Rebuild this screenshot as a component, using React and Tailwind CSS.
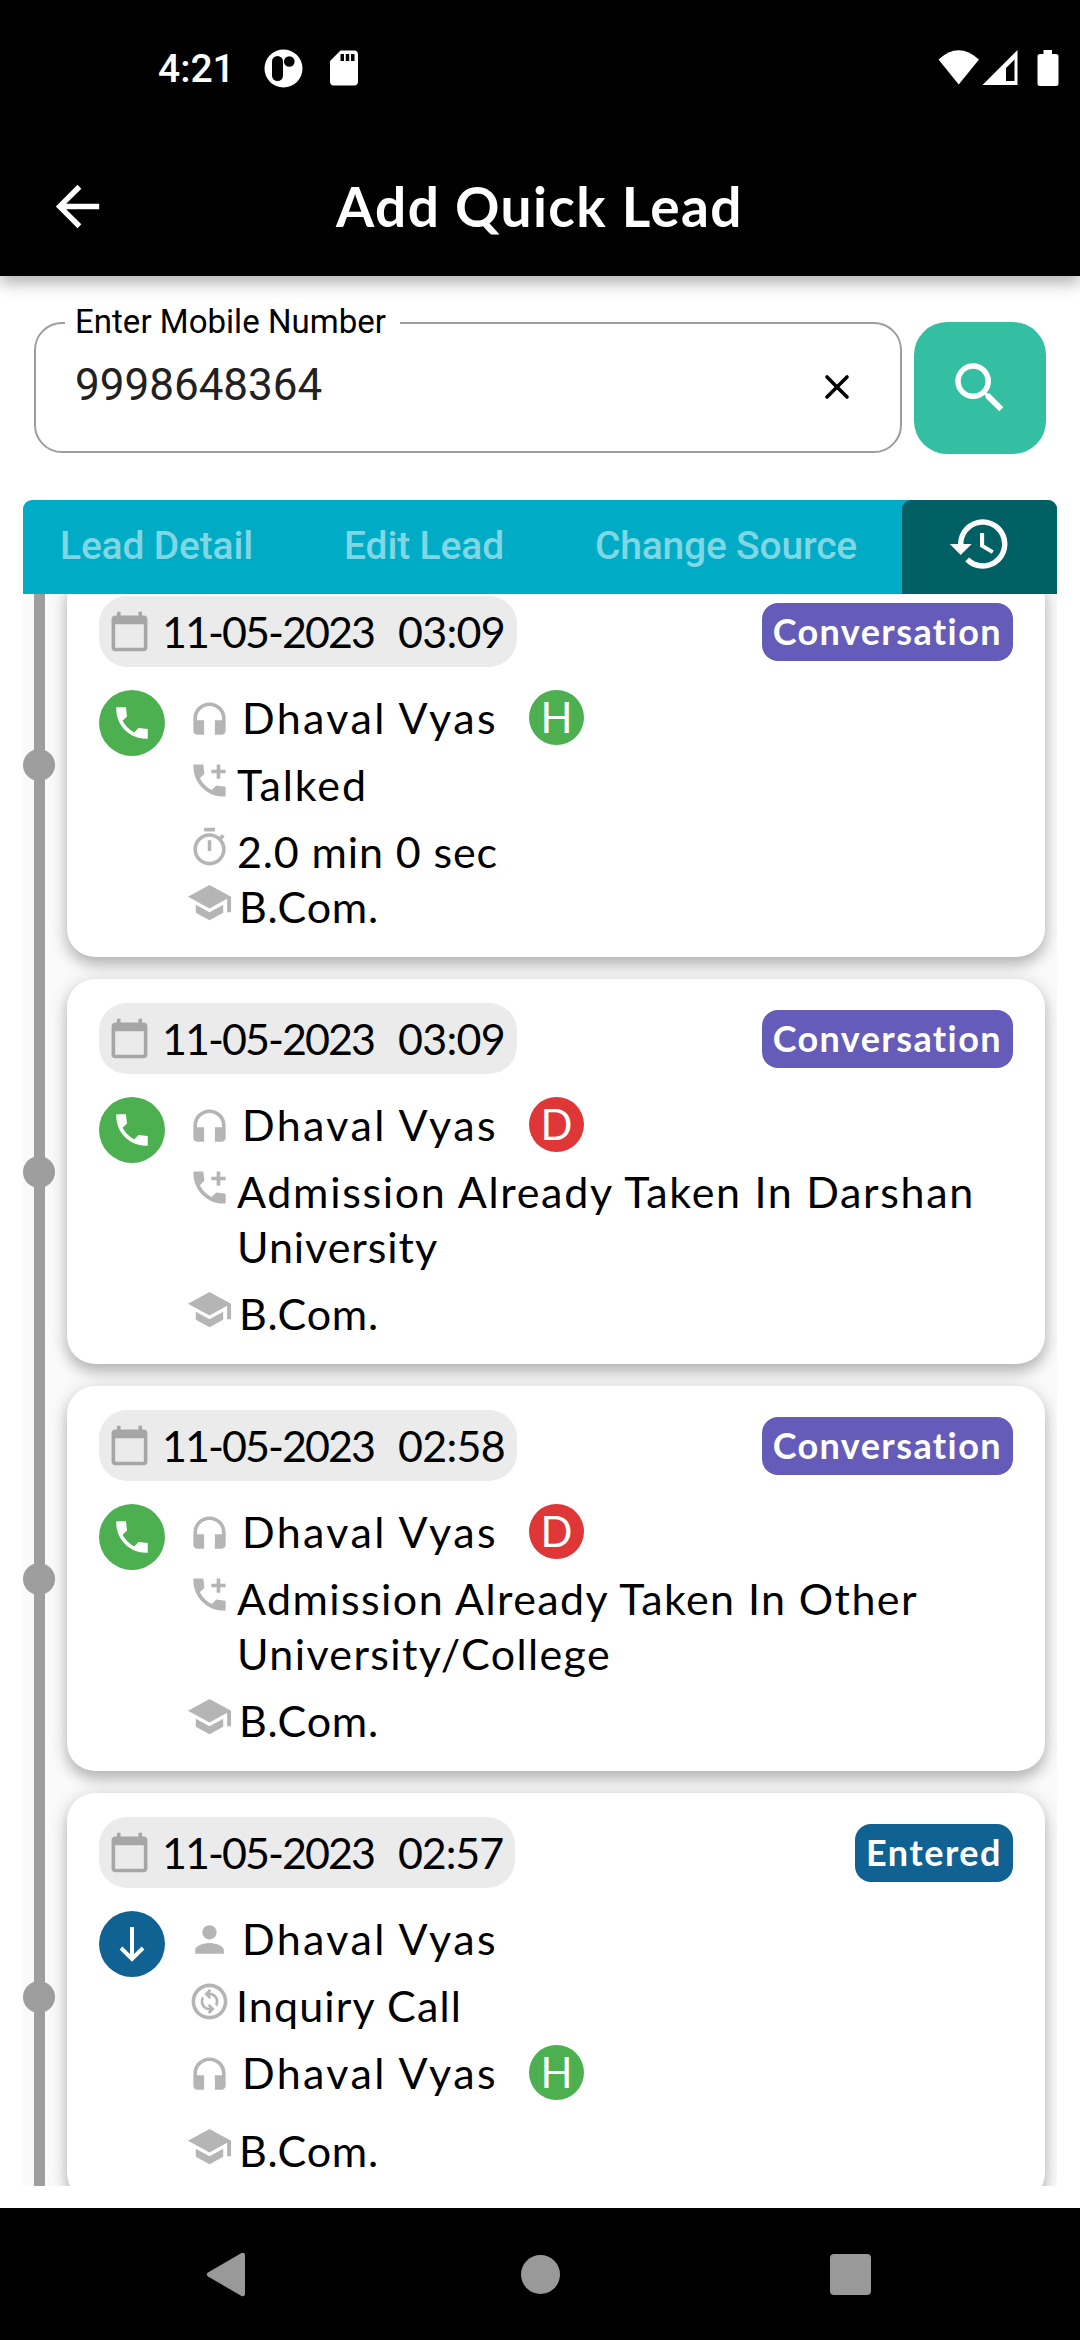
import { useLayoutEffect, useRef, useState } from 'react';
import {
    MdArrowBack,
    MdCalendarToday,
    MdHeadphones,
    MdHistory,
    MdOutlineChangeCircle,
    MdOutlineTimer,
    MdPerson,
    MdSchool,
    MdSdCard,
    MdSearch,
} from 'react-icons/md';

// spreads the letters so that the text takes up the given width
function FitText({ width, className = '', children }) {
    const ref = useRef(null);
    const [spacing, setSpacing] = useState(0);

    useLayoutEffect(() => {
        const natural = ref.current.getBoundingClientRect().width;
        setSpacing((width - natural) / children.length);
    }, [width, children]);

    return (
        <span ref={ref} className={`inline-block whitespace-pre ${className}`} style={{ letterSpacing: `${spacing}px` }}>
            {children}
        </span>
    );
}

function CallIcon({ size, plus }) {
    return (
        <svg width={size} height={size} viewBox="0 0 24 24" fill="currentColor">
            <path d="M21 15.46l-5.27-.61-2.52 2.52a15.045 15.045 0 0 1-6.59-6.59l2.53-2.53L8.54 3H3.03C2.45 13.18 10.82 21.55 21 20.97v-5.51z" />
            {plus && <path d="M16 3h2v3h3v2h-3v3h-2V8h-3V6h3z" />}
        </svg>
    );
}

function DownIcon() {
    return (
        <svg width="42" height="42" viewBox="0 0 42 42" fill="none" stroke="currentColor" strokeWidth="4">
            <path d="M21 4v32M10 25l11 11 11-11" />
        </svg>
    );
}

const entries = [
    {
        date: '11-05-2023', time: '03:09', timeWidth: 107, status: 'Conversation', statusWidth: 230, kind: 'call',
        rows: [
            { icon: 'agent', lines: [['Dhaval Vyas', 256]], initial: 'H' },
            { icon: 'result', lines: [['Talked', 131]] },
            { icon: 'timer', lines: [['2.0 min 0 sec', 261]] },
            { icon: 'course', lines: [['B.Com.', 140]], gap: 'mt-0' },
        ],
    },
    {
        date: '11-05-2023', time: '03:09', timeWidth: 107, status: 'Conversation', statusWidth: 230, kind: 'call',
        rows: [
            { icon: 'agent', lines: [['Dhaval Vyas', 256]], initial: 'D' },
            { icon: 'result', lines: [['Admission Already Taken In Darshan', 738], ['University', 201]] },
            { icon: 'course', lines: [['B.Com.', 140]] },
        ],
    },
    {
        date: '11-05-2023', time: '02:58', timeWidth: 107, status: 'Conversation', statusWidth: 230, kind: 'call',
        rows: [
            { icon: 'agent', lines: [['Dhaval Vyas', 256]], initial: 'D' },
            { icon: 'result', lines: [['Admission Already Taken In Other', 681], ['University/College', 374]] },
            { icon: 'course', lines: [['B.Com.', 140]] },
        ],
    },
    {
        date: '11-05-2023', time: '02:57', timeWidth: 105, status: 'Entered', statusWidth: 136, kind: 'entered',
        rows: [
            { icon: 'person', lines: [['Dhaval Vyas', 256]] },
            { icon: 'source', lines: [['Inquiry Call', 226]] },
            { icon: 'agent', lines: [['Dhaval Vyas', 256]], initial: 'H' },
            { icon: 'course', lines: [['B.Com.', 140]], gap: 'mt-[23px]' },
        ],
    },
];

const icons = {
    agent: <MdHeadphones size={43} />,
    person: <MdPerson size={43} />,
    result: <CallIcon size={43} plus />,
    source: <MdOutlineChangeCircle size={43} />,
    timer: <MdOutlineTimer size={43} />,
    course: <MdSchool size={47} />,
};

const isName = (icon) => icon === 'agent' || icon === 'person';

const textPad = {
    agent: 'pl-[9px]',
    person: 'pl-[9px]',
    course: 'pl-[6px]',
    result: 'pl-[4px]',
    source: 'pl-[3px]',
    timer: 'pl-[4px]',
};

function DetailRow({ row, first }) {
    const gap = first ? 'mt-0' : row.gap || 'mt-[12px]';
    return (
        <div className={`flex items-start ${gap}`}>
            <span className={`flex h-[47px] w-[47px] shrink-0 items-center justify-center text-[#b5b5b5] ${isName(row.icon) ? 'mt-[5px]' : ''}`}>
                {icons[row.icon]}
            </span>
            <div className={`flex flex-col items-start text-[43px] leading-[55px] text-black ${textPad[row.icon]}`}>
                {row.lines.map(([text, width]) => (
                    <FitText key={text} width={width}>{text}</FitText>
                ))}
            </div>
            {row.initial && (
                <span
                    className={`ml-[31px] flex h-[55px] w-[55px] items-center justify-center rounded-full text-[42px] leading-[55px] text-white ${
                        row.initial === 'H' ? 'bg-[#4caf50]' : 'bg-[#df3737]'
                    }`}
                >
                    {row.initial}
                </span>
            )}
        </div>
    );
}

function TimelineEntry({ entry }) {
    const isCall = entry.kind === 'call';
    return (
        <div className="flex">
            <div className="flex w-[32px] shrink-0 flex-col items-center">
                <div className="w-[11px] flex-1 bg-[#9e9e9e]" />
                <div className="-my-px h-[32px] w-[32px] rounded-full bg-[#9e9e9e]" />
                <div className="w-[11px] flex-1 bg-[#9e9e9e]" />
            </div>
            <div className="my-[11px] ml-[12px] w-[978px] rounded-[28px] bg-white px-[32px] pt-[24px] pb-[23px] shadow-[0_8px_14px_rgba(0,0,0,0.22),0_2px_20px_rgba(0,0,0,0.12)]">
                <div className="flex items-center justify-between">
                    <div className="flex h-[71px] items-center rounded-[28px] bg-[#ebebeb] pr-[12px] pl-[9px]">
                        <MdCalendarToday size={43} className="text-[#a6a6a6]" />
                        <div className="flex gap-[24px] pl-[11px] text-[43px] leading-[55px] text-black">
                            <FitText width={212}>{entry.date}</FitText>
                            <FitText width={entry.timeWidth}>{entry.time}</FitText>
                        </div>
                    </div>
                    <div className={`flex h-[58px] items-center rounded-[16px] px-[11px] text-[36px] leading-[45px] font-bold text-white ${isCall ? 'bg-[#655bb8]' : 'bg-[#0f6292]'}`}>
                        <FitText width={entry.statusWidth}>{entry.status}</FitText>
                    </div>
                </div>
                <div className="mt-[23px] flex items-start">
                    <div className={`flex h-[66px] w-[66px] items-center justify-center rounded-full text-white ${isCall ? 'bg-[#4caf50]' : 'bg-[#0f6292]'}`}>
                        {isCall ? <CallIcon size={42} /> : <DownIcon />}
                    </div>
                    <div className="ml-[21px]">
                        {entry.rows.map((row, i) => (
                            <DetailRow key={i} row={row} first={i === 0} />
                        ))}
                    </div>
                </div>
            </div>
        </div>
    );
}

function StatusBar() {
    return (
        <div className="flex h-[138px] items-start bg-black text-white">
            <span className="mt-[46px] ml-[158px] w-[72px] font-[Roboto] text-[39px] leading-[46px] font-medium">4:21</span>
            <svg className="mt-[49px] ml-[34px]" width="39" height="39" viewBox="0 0 39 39">
                <circle cx="19.5" cy="19.5" r="19" fill="white" />
                <rect x="8" y="7" width="11" height="25" rx="5.5" fill="black" />
                <circle cx="25.3" cy="12.5" r="5.3" fill="black" />
            </svg>
            <MdSdCard size={42} className="mt-[47px] ml-[20px]" />
            <svg className="mt-[49px] ml-[573px]" width="124" height="38" viewBox="0 0 124 38" fill="white">
                <path d="M0.5 10.5Q20.5-8 41 10.5L20.7 35.5z" />
                <path fillRule="evenodd" d="M44.5 36L79.5 1v35zM68 32h8.500V10.500L68 19z" />
                <path d="M105.500 1h8.500v4h4q2.500 0 2.500 2.500v27q0 2.500-2.500 2.500h-16q-2.500 0-2.500-2.500v-27q0-2.500 2.500-2.500h3.500z" />
            </svg>
        </div>
    );
}

export default function App() {
    return (
        <div className="flex h-[2340px] w-[1080px] flex-col overflow-hidden bg-white font-[Lato,sans-serif]">
            <header className="z-10 shadow-[0_8px_14px_rgba(0,0,0,0.22),0_2px_20px_rgba(0,0,0,0.12)]">
                <StatusBar />
                <div className="flex h-[138px] items-center bg-black pb-[2px] text-white">
                    <MdArrowBack size={65} className="ml-[45px]" />
                    <h1 className="ml-[226px] text-[55px] leading-[69px] font-bold">
                        <FitText width={407}>Add Quick Lead</FitText>
                    </h1>
                </div>
            </header>

            <div className="mt-[46px] flex gap-[12px] pl-[34px]">
                <div className="relative flex h-[131px] w-[868px] items-center justify-between rounded-[28px] border-[2.5px] border-[#9e9e9e] pr-[49px] pl-[39px] font-[Roboto]">
                    <span className="absolute -top-[22px] left-[29px] bg-white pr-[14px] pl-[10px] text-[33px] leading-[40px] text-black">
                        <FitText width={311}>Enter Mobile Number</FitText>
                    </span>
                    <span className="-mt-[5px] text-[44px] leading-[52px] text-[#212121]">9998648364</span>
                    <svg className="-mt-px" width="28" height="28" viewBox="0 0 28 28" fill="none" stroke="black" strokeWidth="3.600" strokeLinecap="round">
                        <path d="M4 4l20 20M24 4L4 24" />
                    </svg>
                </div>
                <button className="flex h-[132px] w-[132px] items-center justify-center rounded-[33px] bg-[#35bfa2] text-white">
                    <MdSearch size={66} className="-mt-px" />
                </button>
            </div>

            <div className="mt-[46px] ml-[23px] flex h-[94px] w-[1034px] shrink-0 items-center rounded-t-[9px] bg-[#00acc5] font-[Roboto] text-[39px] leading-[46px] font-medium text-[#80d6e2]">
                <FitText width={193} className="-mt-[3px] ml-[37px]">Lead Detail</FitText>
                <FitText width={160} className="-mt-[3px] ml-[91px]">Edit Lead</FitText>
                <FitText width={262} className="-mt-[3px] ml-[91px]">Change Source</FitText>
                <div className="ml-auto flex h-full w-[155px] items-center justify-center rounded-t-[9px] bg-[#006064] text-white">
                    <MdHistory size={66} className="-mt-[6px]" />
                </div>
            </div>

            <div className="ml-[23px] h-[1592px] w-[1034px] shrink-0 overflow-hidden bg-[#fafafa]">
                <div className="-mt-[33px]">
                    {entries.map((entry, i) => (
                        <TimelineEntry key={i} entry={entry} />
                    ))}
                </div>
            </div>

            <nav className="mt-auto flex h-[132px] shrink-0 items-center bg-black text-[#999999]">
                <svg className="ml-[206px]" width="40" height="45" viewBox="0 0 40 45" fill="currentColor">
                    <path d="M2 20.500L35.500 1q3.500-1 3.500 2.500v38q0 3.500-3.500 2.500L2 24.500q-2.500-2 0-4z" />
                </svg>
                <div className="ml-[275px] h-[39px] w-[39px] rounded-full bg-[#999999]" />
                <div className="ml-[270px] h-[41px] w-[41px] rounded-[4px] bg-[#999999]" />
            </nav>
        </div>
    );
}
